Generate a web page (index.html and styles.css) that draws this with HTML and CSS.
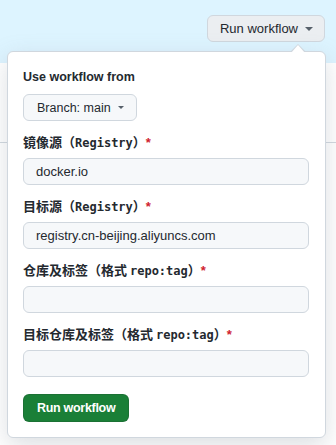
FILE: index.html
```html
<!DOCTYPE html>
<html lang="zh-CN">
<head>
    <meta charset="UTF-8">
    <meta name="viewport" content="width=device-width, initial-scale=1.0">
    <title>Run workflow</title>
    <link rel="stylesheet" href="styles.css">
</head>
<body>
    <div class="banner">
        <button class="btn-toggle" type="button">Run workflow <span class="caret"></span></button>
    </div>
    <div class="subhead"></div>

    <div class="dropdown">
        <h4 class="dropdown-title">Use workflow from</h4>
        <button class="btn-branch" type="button">Branch: main <span class="caret small"></span></button>

        <form id="dispatch-form">
            <div class="form-group">
                <label for="source">镜像源（<span class="mono">Registry</span>）<span class="req">*</span></label>
                <input type="text" id="source" name="source" value="docker.io">
            </div>
            <div class="form-group">
                <label for="target">目标源（<span class="mono">Registry</span>）<span class="req">*</span></label>
                <input type="text" id="target" name="target" value="registry.cn-beijing.aliyuncs.com">
            </div>
            <div class="form-group">
                <label for="image">仓库及标签（格式 <span class="mono">repo:tag</span>）<span class="req">*</span></label>
                <input type="text" id="image" name="image">
            </div>
            <div class="form-group">
                <label for="target-image">目标仓库及标签（格式 <span class="mono">repo:tag</span>）<span class="req">*</span></label>
                <input type="text" id="target-image" name="target-image">
            </div>
            <button type="submit" class="btn-primary">Run workflow</button>
        </form>
    </div>
</body>
</html>
```

FILE: styles.css
```css
body {
    font-family: 'Liberation Sans', Arial, sans-serif;
    font-size: 13px;
    color: #24292f;
    margin: 0;
    width: 336px;
    height: 445px;
    overflow: hidden;
    background-color: #ffffff;
    position: relative;
}
.banner {
    height: 63px;
    box-sizing: border-box;
    padding: 15px 11px 0 0;
    background-color: #ddf4ff;
    display: flex;
    justify-content: flex-end;
    align-items: flex-start;
}
.btn-toggle {
    height: 27px;
    padding: 0 11px 0 12px;
    display: flex;
    align-items: center;
    gap: 7px;
    font-family: inherit;
    font-size: 13px;
    color: #24292f;
    background-color: #ebeef1;
    border: 1px solid #d0d7de;
    border-radius: 6px;
}
.caret {
    width: 0;
    height: 0;
    border-top: 4px solid #57606a;
    border-left: 4px solid transparent;
    border-right: 4px solid transparent;
}
.caret.small {
    border-top-width: 3.5px;
    border-left-width: 3.5px;
    border-right-width: 3.5px;
}
.subhead {
    height: 79px;
    border-bottom: 1px solid #d0d7de;
}
.dropdown {
    position: absolute;
    top: 51px;
    left: 7px;
    width: 319px;
    box-sizing: border-box;
    padding: 16px 16px 15px 15px;
    background-color: #ffffff;
    border: 1px solid #d0d7de;
    border-radius: 6px;
    box-shadow: 0 8px 24px rgba(140,149,159,0.3);
}
.dropdown::before,
.dropdown::after {
    content: "";
    position: absolute;
    width: 0;
    height: 0;
    border-style: solid;
    border-color: transparent;
}
.dropdown::before {
    top: -8px;
    left: 282px;
    border-width: 0 8px 8px 8px;
    border-bottom-color: #d0d7de;
}
.dropdown::after {
    top: -7px;
    left: 283px;
    border-width: 0 7px 8px 7px;
    border-bottom-color: #ffffff;
}
.dropdown-title {
    margin: 0;
    font-size: 12.5px;
    line-height: 18px;
    font-weight: bold;
}
.btn-branch {
    margin-top: 8px;
    height: 27px;
    padding: 0 12px 0 13px;
    display: flex;
    align-items: center;
    gap: 7px;
    font-family: inherit;
    font-size: 12.5px;
    color: #24292f;
    background-color: #f6f8fa;
    border: 1px solid #d0d7de;
    border-radius: 6px;
}
.form-group {
    margin-top: 11px;
}
label {
    display: block;
    margin-bottom: 5px;
    font-family: 'Noto Sans CJK JP', 'Liberation Sans', sans-serif;
    font-size: 13px;
    line-height: 20px;
    font-weight: bold;
    white-space: nowrap;
}
.mono {
    font-family: 'DejaVu Sans Mono', monospace;
    font-size: 12px;
}
.req {
    color: #cf222e;
    font-family: 'Liberation Sans', sans-serif;
}
input {
    display: block;
    width: 100%;
    height: 27px;
    box-sizing: border-box;
    margin: 0;
    padding: 0 12px;
    font-family: 'Liberation Sans', Arial, sans-serif;
    font-size: 13px;
    color: #24292f;
    background-color: #f6f8fa;
    border: 1px solid #d0d7de;
    border-radius: 6px;
}
.btn-primary {
    display: block;
    margin-top: 17px;
    height: 28px;
    padding: 0 13px;
    font-family: inherit;
    font-size: 12.5px;
    font-weight: bold;
    letter-spacing: -0.3px;
    color: #ffffff;
    background-color: #1a7f37;
    border: 1px solid rgba(31,35,40,0.15);
    border-radius: 6px;
}
```
